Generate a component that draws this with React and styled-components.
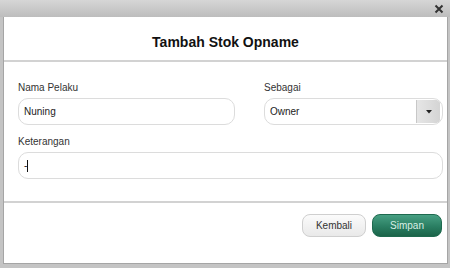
import React from "react";
import styled, { createGlobalStyle } from "styled-components";

const Global = createGlobalStyle`
  html, body { margin: 0; padding: 0; }
  body { font-family: "Liberation Sans", Arial, sans-serif; background: #c4c4c4; }
`;

const Window = styled.div`
  width: 450px;
  height: 268px;
  display: flex;
  flex-direction: column;
  background: linear-gradient(#d6d6d6, #bdbdbd 17px, #c4c4c4 17px, #c4c4c4);
  box-sizing: border-box;
`;

const Header = styled.div`
  height: 17px;
  flex: none;
  display: flex;
  justify-content: flex-end;
  align-items: center;
  padding-right: 5px;
`;

const CloseBtn = styled.div`
  width: 12px;
  height: 12px;
  display: flex;
  align-items: center;
  justify-content: center;
  cursor: pointer;
`;

const Dialog = styled.div`
  flex: 1;
  margin: 0 2px 4px 3px;
  background: #fff;
  border: 1px solid #a5a5a5;
  border-top: none;
  display: flex;
  flex-direction: column;
`;

const TitleBar = styled.div`
  height: 45px;
  box-sizing: border-box;
  padding-top: 17px;
  text-align: center;
  border-bottom: 2px solid #d2d2d2;
`;

const Title = styled.h1`
  margin: 0;
  font-size: 14px;
  line-height: 16px;
  font-weight: bold;
  color: #111;
`;

const Body = styled.div`
  padding: 20px 4px 22px 14px;
  display: grid;
  grid-template-columns: 217px 179px;
  column-gap: 29px;
  row-gap: 11px;
  border-bottom: 2px solid #d2d2d2;
`;

const Field = styled.div`
  display: flex;
  flex-direction: column;
  gap: 4px;
  grid-column: ${(p) => (p.$full ? "1 / -1" : "auto")};
`;

const Label = styled.label`
  font-size: 10px;
  line-height: 12px;
  color: #333;
`;

const Input = styled.div`
  height: 27px;
  box-sizing: border-box;
  border: 1px solid #dcdcdc;
  border-radius: 10px;
  display: flex;
  align-items: center;
  padding-left: 5px;
  font-size: 10px;
  color: #222;
  background: #fff;
  position: relative;
  overflow: hidden;
`;

const Caret = styled.span`
  display: inline-block;
  width: 1px;
  height: 12px;
  background: #111;
`;

const ArrowBox = styled.div`
  position: absolute;
  right: 2px;
  top: 1px;
  bottom: 1px;
  width: 23px;
  border-left: 1px solid #c8c8c8;
  background: linear-gradient(90deg, #e6e6e6, #d4d4d4);
  display: flex;
  align-items: center;
  justify-content: center;
`;

const Footer = styled.div`
  flex: 1;
  display: flex;
  justify-content: flex-end;
  align-items: flex-start;
  gap: 6px;
  padding: 11px 5px 0 0;
`;

const Button = styled.button`
  height: 23px;
  width: ${(p) => p.$w}px;
  border-radius: 8px;
  font-family: "Liberation Sans", Arial, sans-serif;
  font-size: 10px;
  padding: 0;
  cursor: pointer;
  border: 1px solid ${(p) => (p.$primary ? "#1f6a4f" : "#cfcfcf")};
  color: ${(p) => (p.$primary ? "#d8efe4" : "#333")};
  background: ${(p) =>
    p.$primary
      ? "linear-gradient(#47a083, #2a7e62 55%, #1b6449)"
      : "linear-gradient(#fbfbfb, #e9e9e9)"};
`;

export default function App() {
  return (
    <>
      <Global />
      <Window>
        <Header>
          <CloseBtn>
            <svg width="10" height="10" viewBox="0 0 10 10">
              <path d="M1.5 1.5 L8.5 8.5 M8.5 1.5 L1.5 8.5" stroke="#333" strokeWidth="2" />
            </svg>
          </CloseBtn>
        </Header>
        <Dialog>
          <TitleBar>
            <Title>Tambah Stok Opname</Title>
          </TitleBar>
          <Body>
            <Field>
              <Label>Nama Pelaku</Label>
              <Input>Nuning</Input>
            </Field>
            <Field>
              <Label>Sebagai</Label>
              <Input>
                Owner
                <ArrowBox>
                  <svg width="6" height="4" viewBox="0 0 6 4">
                    <path d="M0 0 H6 L3 3.5 Z" fill="#222" />
                  </svg>
                </ArrowBox>
              </Input>
            </Field>
            <Field $full>
              <Label>Keterangan</Label>
              <Input>
                -<Caret />
              </Input>
            </Field>
          </Body>
          <Footer>
            <Button $w={64}>Kembali</Button>
            <Button $w={70} $primary>Simpan</Button>
          </Footer>
        </Dialog>
      </Window>
    </>
  );
}
